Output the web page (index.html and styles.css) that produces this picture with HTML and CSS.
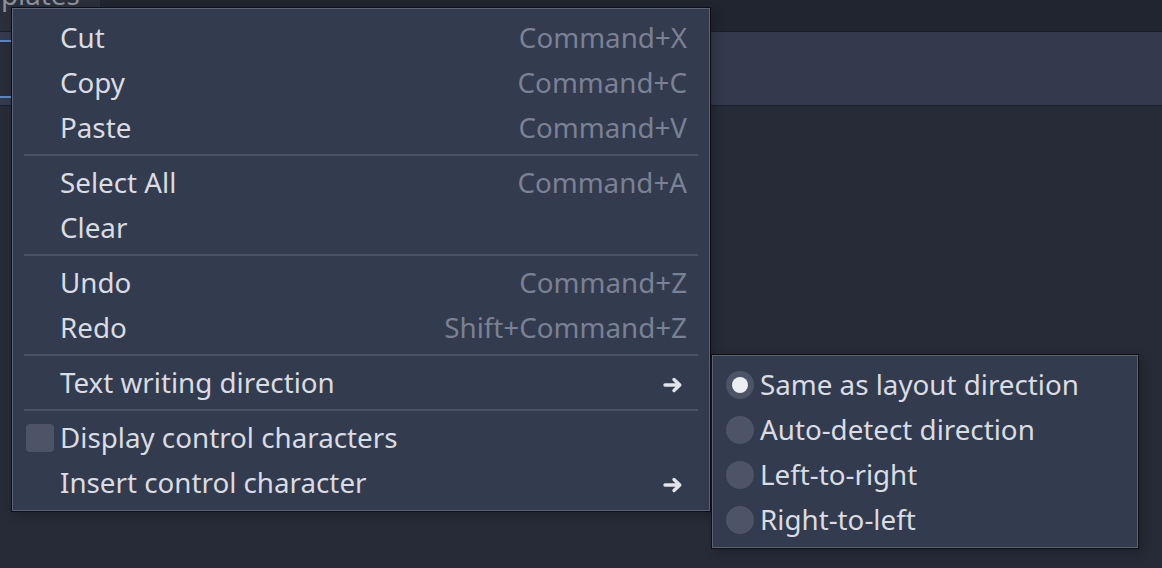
FILE: index.html
```html
<!DOCTYPE html>
<html>
<head>
<meta charset="utf-8">
<link rel="stylesheet" href="styles.css">
</head>
<body>
<div class="screen">
  <div class="topbar">
    <div class="tab"><span class="tab-label">plates</span></div>
  </div>
  <div class="band">
    <div class="field"></div>
  </div>
  <div class="lower"></div>

  <div class="menu main-menu">
    <div class="item"><span class="label">Cut</span><span class="shortcut">Command+X</span></div>
    <div class="item"><span class="label">Copy</span><span class="shortcut">Command+C</span></div>
    <div class="item"><span class="label">Paste</span><span class="shortcut">Command+V</span></div>
    <div class="sep"></div>
    <div class="item"><span class="label">Select All</span><span class="shortcut">Command+A</span></div>
    <div class="item"><span class="label">Clear</span></div>
    <div class="sep"></div>
    <div class="item"><span class="label">Undo</span><span class="shortcut">Command+Z</span></div>
    <div class="item"><span class="label">Redo</span><span class="shortcut">Shift+Command+Z</span></div>
    <div class="sep"></div>
    <div class="item"><span class="label">Text writing direction</span>
      <svg class="arrow" width="20" height="16" viewBox="0 0 20 16"><path d="M2 8 H16.5 M11 2.5 L16.8 8 L11 13.5" fill="none" stroke="#e2e4e8" stroke-width="3.4" stroke-linejoin="round" stroke-linecap="round"/></svg>
    </div>
    <div class="sep"></div>
    <div class="item"><span class="check"></span><span class="label">Display control characters</span></div>
    <div class="item"><span class="label">Insert control character</span>
      <svg class="arrow" width="20" height="16" viewBox="0 0 20 16"><path d="M2 8 H16.5 M11 2.5 L16.8 8 L11 13.5" fill="none" stroke="#e2e4e8" stroke-width="3.4" stroke-linejoin="round" stroke-linecap="round"/></svg>
    </div>
  </div>

  <div class="menu sub-menu">
    <div class="item"><span class="radio checked"></span><span class="label">Same as layout direction</span></div>
    <div class="item"><span class="radio"></span><span class="label">Auto-detect direction</span></div>
    <div class="item"><span class="radio"></span><span class="label">Left-to-right</span></div>
    <div class="item"><span class="radio"></span><span class="label">Right-to-left</span></div>
  </div>
</div>
</body>
</html>
```

FILE: styles.css
```css
* { box-sizing: border-box; }

html, body {
  margin: 0;
  padding: 0;
}

body {
  width: 1162px;
  height: 568px;
  overflow: hidden;
  background: #262b37;
  font-family: "Noto Sans", "Open Sans", sans-serif;
}

.screen {
  position: relative;
  width: 1162px;
  height: 568px;
  display: flex;
  flex-direction: column;
}

.topbar {
  height: 32px;
  background: #21252f;
  border-bottom: 1px solid #1b1e26;
  display: flex;
}

.tab {
  width: 100px;
  height: 31px;
  background: #2a2f3b;
  overflow: hidden;
}

.tab-label {
  display: block;
  margin-top: -25px;
  margin-left: 1px;
  font-size: 27.75px;
  line-height: 38px;
  color: #8a909d;
}

.band {
  height: 74px;
  background: #333a4d;
  border-bottom: 1px solid #1d2029;
  padding-top: 8px;
}

.field {
  width: 300px;
  height: 58px;
  background: #272c38;
  border-top: 2px solid #4f86d6;
  border-bottom: 2px solid #4f86d6;
}

.lower {
  flex: 1;
  background: #262b37;
}

.menu {
  position: absolute;
  background: #333b4f;
  border: 1px solid #5b6274;
  box-shadow: 0 0 0 1px #0e1015, 4px 4px 10px rgba(0, 0, 0, 0.25);
  display: flex;
  flex-direction: column;
  padding: 6px 0 5px 0;
}

.main-menu {
  left: 12px;
  top: 8px;
  width: 698px;
}

.sub-menu {
  left: 712px;
  top: 355px;
  width: 426px;
}

.item {
  position: relative;
  height: 45px;
  display: flex;
  align-items: center;
  padding-left: 47px;
  padding-right: 21px;
  font-size: 27.75px;
  line-height: 45px;
  color: #d9dce3;
  white-space: nowrap;
}

.sub-menu .item {
  padding-top: 0;
}

.label {
  flex: 1;
}

.shortcut {
  color: #7a8194;
  margin-right: 1px;
}

.arrow {
  margin-right: 5px;
  margin-top: 4px;
}

.sep {
  height: 2px;
  margin: 4px 11px 4px 11px;
  background: #4a5266;
}

.check {
  position: absolute;
  left: 13px;
  top: 9px;
  width: 28px;
  height: 28px;
  border-radius: 4px;
  background: #4d5467;
}

.radio {
  position: absolute;
  left: 13px;
  top: 9px;
  width: 28px;
  height: 28px;
  border-radius: 50%;
  background: #4d5467;
  display: flex;
  align-items: center;
  justify-content: center;
}

.radio.checked::after {
  content: "";
  width: 16px;
  height: 16px;
  border-radius: 50%;
  background: #eceef1;
}
```
